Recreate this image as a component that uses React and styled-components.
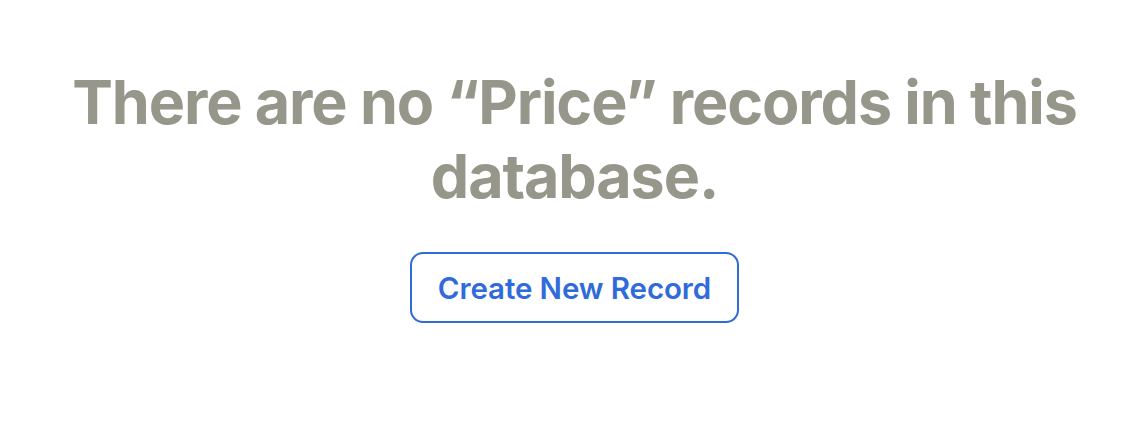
import React from "react";
import styled, { createGlobalStyle } from "styled-components";

const GlobalStyle = createGlobalStyle`
  html, body {
    margin: 0;
    padding: 0;
    background: #ffffff;
  }
  body {
    font-family: Inter, "Noto Sans", "Liberation Sans", sans-serif;
    -webkit-font-smoothing: antialiased;
  }
`;

const EmptyState = styled.section`
  width: 1142px;
  height: 424px;
  box-sizing: border-box;
  padding: 65px 0 0 7px;
  display: flex;
  flex-direction: column;
  align-items: center;
`;

const Message = styled.h1`
  margin: 0;
  max-width: 1040px;
  text-align: center;
  font-size: 61px;
  line-height: 74px;
  font-weight: 700;
  letter-spacing: -1.1px;
  color: #96968a;
`;

const CreateButton = styled.button`
  margin-top: 39px;
  height: 71px;
  padding: 0 26px;
  font-family: inherit;
  font-size: 29.5px;
  font-weight: 600;
  letter-spacing: -0.1px;
  color: #2f6bd9;
  background: #ffffff;
  border: 2px solid #2f6bd9;
  border-radius: 13px;
  cursor: pointer;
`;

const App = () => {
  return (
    <>
      <GlobalStyle />
      <EmptyState>
        <Message>There are no “Price” records in this database.</Message>
        <CreateButton type="button">Create New Record</CreateButton>
      </EmptyState>
    </>
  );
};

export default App;
